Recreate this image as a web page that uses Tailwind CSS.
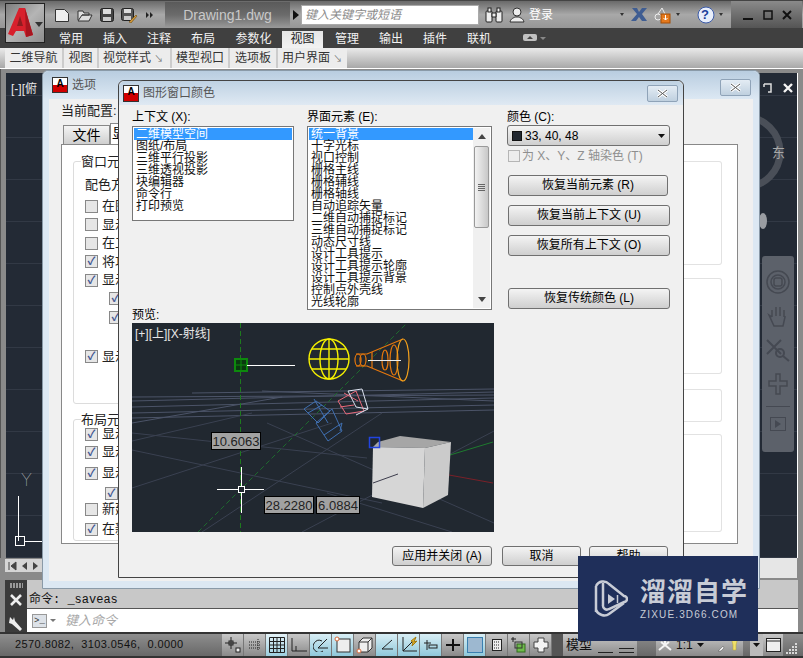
<!DOCTYPE html>
<html lang="zh">
<head>
  <meta charset="UTF-8" />
  <title>AutoCAD - 图形窗口颜色</title>
  <script src="https://cdn.jsdelivr.net/npm/@tailwindcss/browser@4"></script>
</head>
<body class="relative w-[803px] h-[658px] overflow-hidden bg-[#6e6e6e] text-[12px] leading-[14px] font-['Liberation_Sans','Noto_Sans_CJK_SC',sans-serif]">

  <!-- title bar -->
  <header class="h-[28px] flex items-center bg-linear-to-b from-[#6a6a6a] via-[#a8a8a8] to-[#969696] border-t border-[#444]">
    <div class="ml-[5px] mt-[16px] w-[40px] h-[40px] z-10 border border-[#222] bg-linear-to-br from-[#7d7d7d] via-[#b5b5b5] to-[#8e8e8e] flex items-center justify-center relative">
      <svg width="38" height="38" viewBox="0 0 38 38">
        <polygon points="13,4 19,4 27,31 20,33 18,27 10,27 7,32 2,30" fill="#d8202c"/>
        <polygon points="14,12 17,22 11,22" fill="#8e1c20"/>
        <polygon points="19,4 27,31 20,33" fill="#a8151f"/>
        <polygon points="29,18 37,18 33,23" fill="#333"/>
      </svg>
    </div>
    <div class="ml-[8px] flex items-center gap-[5px] w-[112px] h-[20px]">
      <svg width="18" height="16" viewBox="0 0 18 16" fill="#eee" stroke="#333"><path d="M2.5 2.5h9l4 4v8h-13z"/></svg>
      <svg width="18" height="16" viewBox="0 0 18 16" fill="#ddd" stroke="#333"><path d="M2 13V4h5l1 2h5v2H6l-4 6h11l3-6H6"/></svg>
      <svg width="16" height="16" viewBox="0 0 16 16"><rect x="1.5" y="1.5" width="13" height="13" rx="2" fill="#444" stroke="#222"/><rect x="4" y="2" width="8" height="5" fill="#ddd"/><rect x="4" y="10" width="8" height="4" fill="#ccc"/></svg>
      <svg width="18" height="16" viewBox="0 0 18 16"><rect x="1.5" y="1.5" width="12" height="12" rx="2" fill="#555" stroke="#222"/><rect x="4" y="2" width="7" height="4" fill="#ddd"/><rect x="4" y="9" width="7" height="4" fill="#ccc"/><path d="M9 15l7-7 1 1-6 7z" fill="#d59a3a" stroke="#6b4b10" stroke-width=".6"/></svg>
      <svg width="10" height="8" viewBox="0 0 10 8" fill="#222" class="ml-[2px]"><path d="M1 1l3 3-3 3zM5 1l3 3-3 3z"/></svg>
    </div>
    <div class="w-[125px] h-[26px] bg-linear-to-b from-[#5a5a5a] via-[#6b6b6b] to-[#9a9a9a] text-[#c9c9c9] text-[14px] flex items-center justify-center">Drawing1.dwg</div>
    <svg width="12" height="10" viewBox="0 0 12 10" class="mr-[-1px]"><path d="M3 0l6 5-6 5z" fill="#111"/></svg>
    <div class="w-[178px] h-[20px] bg-white border border-[#aaa] text-[#8a8a8a] italic pl-[3px] flex items-center">键入关键字或短语</div>
    <svg width="20" height="16" viewBox="0 0 20 16" class="ml-[5px]" fill="#eee" stroke="#222"><rect x="2" y="4" width="6" height="11" rx="1"/><rect x="12" y="4" width="6" height="11" rx="1"/><rect x="4" y="1" width="3" height="4"/><rect x="13" y="1" width="3" height="4"/><path d="M8 6h4v4H8z"/></svg>
    <svg width="18" height="18" viewBox="0 0 18 18" class="ml-[4px]" fill="#eee" stroke="#333"><circle cx="9" cy="6" r="4"/><path d="M2 16c1-4 4-4 5-5h4c1 1 4 1 5 5z"/></svg>
    <span class="ml-[3px] text-white w-[89px]">登录</span>
    <svg width="8" height="4" viewBox="0 0 8 4" class="mr-[5px]"><path d="M2 0h4L4 3z" fill="#333"/></svg>
    <svg width="17" height="15" viewBox="0 0 17 15" class="mr-[5px]"><path d="M1 1h5l2 4 3-4h5l-5 6 5 7h-5l-3-4-3 4H0l6-7z" fill="#3f5d92"/></svg>
    <svg width="18" height="18" viewBox="0 0 18 18"><circle cx="5" cy="11" r="3" fill="none" stroke="#eee"/><path d="M5 8l4-6 3 6" fill="none" stroke="#eee"/><rect x="8" y="8" width="9" height="9" fill="#e5791c" stroke="#a34f06"/><path d="M12.5 9v5M10.5 12l2 2 2-2" stroke="#fff" fill="none"/></svg>
    <svg width="8" height="4" viewBox="0 0 8 4" class="ml-[3px]"><path d="M2 0h4L4 3z" fill="#333"/></svg>
    <svg width="18" height="18" viewBox="0 0 18 18" class="ml-[15px]"><circle cx="9" cy="9" r="8" fill="#e8eefb" stroke="#3a5aa8"/></svg>
    <span class="ml-[-14px] w-[10px] text-[13px] font-bold text-[#20409a]">?</span>
    <svg width="8" height="4" viewBox="0 0 8 4" class="ml-[6px]"><path d="M2 0h4L4 3z" fill="#333"/></svg>
    <div class="ml-[6px] w-[71px] h-[27px] bg-linear-to-b from-[#8a8a8a] to-[#555] flex items-center justify-center gap-[9px]">
      <svg width="12" height="12" viewBox="0 0 12 12"><path d="M1 10h10" stroke="#111" stroke-width="2"/></svg>
      <svg width="10" height="10" viewBox="0 0 10 10"><rect x="1" y="1" width="8" height="8" fill="none" stroke="#111" stroke-width="1.5"/></svg>
      <svg width="10" height="10" viewBox="0 0 10 10"><path d="M1 1l8 8M9 1l-8 8" stroke="#111" stroke-width="2"/></svg>
    </div>
  </header>

  <!-- ribbon tabs -->
  <nav class="h-[20px] bg-[#404040] pl-[49px] flex text-[#f2f2f2] text-center leading-[23px]">
    <span class="w-[44px]">常用</span>
    <span class="w-[44px]">插入</span>
    <span class="w-[44px]">注释</span>
    <span class="w-[44px]">布局</span>
    <span class="w-[57px]">参数化</span>
    <span class="w-[41px] mt-[3px] leading-[17px] bg-linear-to-b from-[#e6e6e6] to-[#f2f2f2] text-[#222]">视图</span>
    <span class="w-[48px]">管理</span>
    <span class="w-[40px]">输出</span>
    <span class="w-[48px]">插件</span>
    <span class="w-[40px]">联机</span>
    <span class="ml-[24px] flex items-center gap-[3px]">
      <svg width="14" height="8" viewBox="0 0 14 8"><rect width="14" height="7" rx="2" fill="#c0c0c0"/><path d="M4 5l3-3 3 3z" fill="#444"/></svg>
      <svg width="6" height="3" viewBox="0 0 6 3"><path d="M0 0h6L3 3z" fill="#888"/></svg>
    </span>
  </nav>

  <!-- ribbon panel labels -->
  <div class="h-[21px] flex bg-linear-to-b from-[#eaeaea] to-[#a8a8a8] border-b border-white text-[#333] leading-[21px] pl-[5px]">
    <span class="w-[59px] bg-[#ececec] border-r-2 border-[#ccc] text-center">二维导航</span>
    <span class="w-[35px] bg-[#ececec] border-r-2 border-[#ccc] text-center">视图</span>
    <span class="w-[73px] bg-[#ececec] border-r-2 border-[#ccc] pl-[4px]">视觉样式 <span class="text-[9px] text-[#777]">↘</span></span>
    <span class="w-[58px] bg-[#ececec] border-r-2 border-[#ccc] text-center">模型视口</span>
    <span class="w-[48px] bg-[#ececec] border-r-2 border-[#ccc] text-center">选项板</span>
    <span class="w-[69px] bg-[#ececec] pl-[4px]">用户界面 <span class="text-[9px] text-[#777]">↘</span></span>
  </div>

  <!-- drawing area -->
  <main class="relative h-[489px] bg-[#8a8a8a] pt-[4px] pl-[5px] pr-[5px] border-l border-[#555]">
    <div class="relative h-[485px] border-r border-white bg-[#232a35] bg-[repeating-linear-gradient(0deg,#323945_0,#323945_1px,transparent_1px,transparent_42px)] text-[#e8e8e8]">
      <span class="absolute left-[5px] top-[9px] whitespace-nowrap">[-][俯</span>

      <!-- UCS icon -->
      <span class="absolute left-[15px] top-[400px] text-[17px] font-['Inter'] font-thin text-[#d8d8d8]">Y</span>
      <div class="absolute left-[12px] top-[423px] w-px h-[45px] bg-white"></div>
      <div class="absolute left-[9px] top-[463px] w-[10px] h-[10px] border border-white"></div>
      <div class="absolute left-[19px] top-[468px] w-[19px] h-px bg-white"></div>

      <!-- viewcube + nav bar on the right -->
      <svg class="absolute left-[700px] top-[30px]" width="90" height="130" viewBox="0 0 90 130">
        <circle cx="39" cy="49" r="35" fill="none" stroke="#4a4f58" stroke-width="7"/>
        <ellipse cx="57" cy="118" rx="4" ry="8" fill="#9a9da2"/>
      </svg>
      <span class="absolute left-[766px] top-[73px] text-[13px] text-[#a8a8a8]">东</span>
      <svg class="absolute left-[756px] top-[10px]" width="34" height="12" viewBox="0 0 34 12">
        <path d="M2 1h7v8H6M2 1v3" fill="none" stroke="#ddd" stroke-width="1.5"/>
        <path d="M22 1l8 8M30 1l-8 8" stroke="#f4f4f4" stroke-width="2.4"/>
      </svg>
      <div class="absolute left-[756px] top-[183px] w-[32px] h-[196px] rounded-[3px] bg-[#5c616a] flex flex-col items-center pt-[14px] gap-[10px]">
        <svg width="24" height="24" viewBox="0 0 24 24" fill="none" stroke="#454952" stroke-width="1.5"><circle cx="12" cy="12" r="11"/><circle cx="12" cy="12" r="7"/><rect x="8" y="8" width="8" height="8" rx="2"/></svg>
        <svg width="24" height="24" viewBox="0 0 24 24" fill="none" stroke="#454952" stroke-width="1.5"><path d="M6 13V6M10 12V3M14 12V3M18 13V6M6 13l-3-2 5 11h9l2-9v-1"/></svg>
        <svg width="26" height="24" viewBox="0 0 26 24" fill="none" stroke="#454952" stroke-width="2"><path d="M2 2l14 14M16 2L2 16"/><circle cx="15" cy="15" r="4"/><path d="M18 18l6 5"/></svg>
        <svg width="22" height="24" viewBox="0 0 22 24" fill="none" stroke="#454952" stroke-width="1.5"><path d="M9 2h4v7h7v5h-7v8H9v-8H2V9h7z"/></svg>
        <div class="w-[24px] h-px bg-[#454952]"></div>
        <svg width="16" height="14" viewBox="0 0 16 14"><rect x=".5" y=".5" width="15" height="13" fill="none" stroke="#454952"/><path d="M5 3l6 4-6 4z" fill="#454952"/></svg>
      </div>
    </div>
  </main>

  <!-- command window -->
  <section class="absolute left-0 top-[558px] w-[803px] h-[76px] flex bg-[#8a8a8a] pl-[5px] pr-[5px]">
    <div class="flex-1 relative">
      <div class="h-[14px] bg-[#d5d5d5] w-[37px] flex items-center gap-[4px] pl-[3px] border-t border-[#888]">
        <svg width="9" height="10" viewBox="0 0 9 10"><path d="M1 1v8M8 1L3 5l5 4z" fill="#444" stroke="#444"/></svg>
        <svg width="7" height="10" viewBox="0 0 7 10"><path d="M6 1L1 5l5 4z" fill="#444"/></svg>
        <svg width="7" height="10" viewBox="0 0 7 10"><path d="M1 1l5 4-5 4z" fill="#444"/></svg>
      </div>
      <div class="absolute left-[755px] top-0 w-[37px] h-[20px] bg-[#e6e6e6]"></div>
      <div class="absolute left-0 top-[22px] w-[793px] h-[52px] flex">
        <div class="w-[22px] bg-[#3b3b3b] flex flex-col items-center">
          <div class="mt-[3px] w-[13px] h-[5px] bg-[repeating-linear-gradient(90deg,#999_0,#999_2px,transparent_2px,transparent_3px)]"></div>
          <svg class="mt-[6px]" width="12" height="12" viewBox="0 0 12 12"><path d="M1 1l10 10M11 1L1 11" stroke="#eee" stroke-width="2.6"/></svg>
          <svg class="mt-[9px]" width="16" height="16" viewBox="0 0 16 16"><path d="M2 2l3 3 1-3 1 4 7 8-2 2-8-7-3-1z" fill="#eee"/></svg>
        </div>
        <div class="flex-1 flex flex-col">
          <div class="h-[29px] bg-[#c8c8c8] border-b border-[#555] pt-[13px] pl-[2px] text-[#111] font-['Liberation_Mono','Noto_Sans_CJK_SC',monospace] whitespace-pre">命令: _saveas</div>
          <div class="h-[23px] bg-white flex items-center pl-[5px]">
            <div class="w-[15px] h-[14px] bg-[#dde2e8] border border-[#999] text-[9px] leading-[12px] text-[#333] text-center font-['Liberation_Mono',monospace]">&gt;_</div>
            <svg class="ml-[3px]" width="6" height="3" viewBox="0 0 6 3"><path d="M0 0h6L3 3z" fill="#777"/></svg>
            <span class="ml-[9px] text-[#a8a8a8] italic text-[13px]">键入命令</span>
          </div>
        </div>
      </div>
    </div>
  </section>

  <!-- status bar -->
  <footer class="absolute left-0 bottom-0 w-[803px] h-[26px] flex items-stretch pl-[4px] border-t-2 border-b-2 border-[#333] bg-linear-to-b from-[#8e8e8e] to-[#686868]">
    <div class="w-[218px] pl-[11px] pb-[2px] flex items-center text-[11px] text-[#111] whitespace-pre tracking-[0.42px]">2570.8082,  3103.0546,  0.0000</div>
    <div class="flex text-[#111]">
      <span class="w-[22px] border-r border-[#777] bg-linear-to-b from-[#c8c8c8] to-[#8a8a8a] flex items-center justify-center"><svg width="16" height="16" viewBox="0 0 16 16" fill="none" stroke="#222"><path d="M0 6h12M6 0v12"/><rect x="4" y="4" width="4" height="4"/><rect x="11" y="11" width="4" height="4" fill="#eee"/></svg></span>
      <span class="w-[22px] border-r border-[#777] bg-linear-to-b from-[#c8c8c8] to-[#8a8a8a] flex items-center justify-center"><svg width="14" height="12" viewBox="0 0 14 12" fill="none" stroke="#222" stroke-dasharray="1 1"><path d="M1 3h12M1 6h12M1 9h12M10 0v11"/></svg></span>
      <span class="w-[22px] border-r border-[#777] bg-linear-to-b from-[#e4f2f7] to-[#9ccfdf] flex items-center justify-center"><svg width="16" height="16" viewBox="0 0 16 16" fill="none" stroke="#222"><path d="M.5.5h15v15H.5zM4.5 1v14M8 1v14M11.5 1v14M1 4.5h14M1 8h14M1 11.5h14"/></svg></span>
      <span class="w-[22px] border-r border-[#777] bg-linear-to-b from-[#c8c8c8] to-[#8a8a8a] flex items-center justify-center"><svg width="16" height="14" viewBox="0 0 16 14" fill="none" stroke="#222"><path d="M1 0v13h15M5 13V8"/></svg></span>
      <span class="w-[22px] border-r border-[#777] bg-linear-to-b from-[#d8eef5] to-[#8fc8da] flex items-center justify-center"><svg width="16" height="14" viewBox="0 0 16 14" fill="none" stroke="#222"><path d="M14 1L5 10h10"/><path d="M9 3a6 6 0 1 0 1 10"/></svg></span>
      <span class="w-[22px] border-r border-[#777] bg-linear-to-b from-[#d8eef5] to-[#8fc8da] flex items-center justify-center relative"><svg width="18" height="18" viewBox="0 0 18 18"><rect x="3" y="3" width="13" height="13" fill="#eee" stroke="#333"/><circle cx="3" cy="3" r="2" fill="#fff" stroke="#d96a3a"/></svg></span>
      <span class="w-[22px] border-r border-[#777] bg-linear-to-b from-[#c8c8c8] to-[#8a8a8a] flex items-center justify-center"><svg width="18" height="18" viewBox="0 0 18 18"><path d="M3 6l4-4h9v10l-4 4H3z" fill="#eee" stroke="#333"/><path d="M3 6h9v10M12 6l4-4" fill="none" stroke="#333"/><circle cx="3" cy="15" r="2" fill="#fff" stroke="#d96a3a"/></svg></span>
      <span class="w-[22px] border-r border-[#777] bg-linear-to-b from-[#d8eef5] to-[#8fc8da] flex items-center justify-center"><svg width="14" height="12" viewBox="0 0 14 12" fill="none" stroke="#222"><path d="M12 1L2 10h11"/></svg></span>
      <span class="w-[22px] border-r border-[#777] bg-linear-to-b from-[#d8eef5] to-[#8fc8da] flex items-center justify-center"><svg width="18" height="18" viewBox="0 0 18 18" fill="none" stroke="#222"><path d="M3 1v14h14M3 15l9-9"/><path d="M11 5l5-4-2 5 3-1-5 5 1-4z" fill="#e0b22c" stroke="#a37a10"/></svg></span>
      <span class="w-[22px] border-r border-[#777] bg-linear-to-b from-[#d8eef5] to-[#8fc8da] flex items-center justify-center"><svg width="14" height="12" viewBox="0 0 14 12" fill="none" stroke="#222"><path d="M3 1v10M0 4h7"/><rect x="5" y="6" width="8" height="3"/></svg></span>
      <span class="w-[22px] border-r border-[#777] bg-linear-to-b from-[#c8c8c8] to-[#8a8a8a] flex items-center justify-center"><svg width="14" height="14" viewBox="0 0 14 14"><path d="M0 7h14M7 1v12" stroke="#111" stroke-width="2"/></svg></span>
      <span class="w-[22px] border-r border-[#777] bg-linear-to-b from-[#d8eef5] to-[#8fc8da] flex items-center justify-center"><div class="w-[16px] h-[16px] border border-[#3a7fb0] bg-[#9db8d0]"></div></span>
      <span class="w-[22px] border-r border-[#777] bg-linear-to-b from-[#c8c8c8] to-[#8a8a8a] flex items-center justify-center"><svg width="10" height="12" viewBox="0 0 10 12"><rect x=".5" y=".5" width="9" height="11" fill="#eee" stroke="#222"/><path d="M2 3h6M2 6h6M2 9h6" stroke="#222" stroke-dasharray="1 1"/></svg></span>
      <span class="w-[22px] border-r border-[#777] bg-linear-to-b from-[#c8c8c8] to-[#8a8a8a] flex items-center justify-center"><svg width="18" height="18" viewBox="0 0 18 18"><path d="M1 3h5M3 1v5" stroke="#222"/><rect x="7" y="8" width="8" height="8" fill="#6fbb4b" stroke="#336a1f"/><rect x="5" y="6" width="7" height="6" fill="none" stroke="#333"/></svg></span>
      <span class="w-[22px] border-r border-[#777] bg-linear-to-b from-[#c8c8c8] to-[#8a8a8a] flex items-center justify-center"><svg width="16" height="16" viewBox="0 0 16 16"><path d="M5 1h6v4h4v6h-4v4H5v-4H1V5h4z" fill="#f4f4f4" stroke="#444"/></svg></span>
      <span class="w-[11px] bg-[#555]"></span>
      <span class="w-[32px] bg-linear-to-b from-[#c8c8c8] to-[#8a8a8a] text-center leading-[22px] text-[13px]">模型</span>
      <span class="w-[21px] bg-linear-to-b from-[#c8c8c8] to-[#8a8a8a] flex items-end justify-center pb-[3px]"><i class="w-[15px] h-[3px] border-b border-[#222]"></i></span>
      <span class="w-[21px] bg-linear-to-b from-[#c8c8c8] to-[#8a8a8a] flex items-end justify-center pb-[3px]"><i class="w-[15px] h-[5px] border-y border-[#222]"></i></span>
      <span class="w-[19px]"></span>
      <span class="w-[58px] bg-linear-to-b from-[#c8c8c8] to-[#8a8a8a] flex items-center gap-[4px] pl-[2px]">
        <svg width="14" height="12" viewBox="0 0 14 12"><path d="M7 1v6M7 6L1 11M7 6l6 5M3 3l4 3 4-3" stroke="#f4f4f4" stroke-width="2" fill="none"/></svg>
        <span>1:1</span>
        <svg width="7" height="4" viewBox="0 0 7 4"><path d="M0 0h7L3.500 4z" fill="#111"/></svg>
      </span>
      <span class="w-[29px] bg-linear-to-b from-[#c8c8c8] to-[#8a8a8a] flex items-center justify-center">
        <svg width="22" height="16" viewBox="0 0 22 16"><path d="M0 14l5-5 1 2-3 3z" fill="#eee" stroke="#555" stroke-width=".5"/><path d="M13 0h7l-2 8v5h-3V8z" fill="#efe06a" stroke="#b5a42a" stroke-width=".5"/></svg>
      </span>
      <span class="w-[7px]"></span>
      <span class="w-[13px] flex items-center justify-center bg-[#bbb]"><svg width="7" height="4" viewBox="0 0 7 4"><path d="M0 0h7L3.500 4z" fill="#111"/></svg></span>
      <span class="w-[20px] flex items-center justify-center bg-linear-to-b from-[#c8c8c8] to-[#8a8a8a]"><svg width="15" height="14" viewBox="0 0 15 14"><rect x=".5" y=".5" width="14" height="13" fill="#eee" stroke="#222"/><path d="M1 3h13" stroke="#222"/></svg></span>
      <span class="w-[15px] flex items-end justify-end pb-[1px]"><svg width="13" height="13" viewBox="0 0 13 13" fill="#d8d8d8"><rect x="10" y="1" width="2" height="2"/><rect x="7" y="4" width="2" height="2"/><rect x="10" y="4" width="2" height="2"/><rect x="4" y="7" width="2" height="2"/><rect x="7" y="7" width="2" height="2"/><rect x="10" y="7" width="2" height="2"/><rect x="1" y="10" width="2" height="2"/><rect x="4" y="10" width="2" height="2"/><rect x="7" y="10" width="2" height="2"/><rect x="10" y="10" width="2" height="2"/></svg></span>
    </div>
  </footer>

  <!-- options dialog (behind) -->
  <section class="absolute left-[42px] top-[70px] w-[718px] h-[519px] rounded-t-[6px] border border-[#8a9aa8] bg-[#dce8f3] flex flex-col px-[6px] pb-[7px]">
    <div class="h-[28px] -mx-[6px] pl-[9px] rounded-t-[6px] bg-linear-to-b from-[#b9cde0] to-[#dce8f3] flex items-center gap-[3px] text-[#555]">
      <span class="w-[16px] h-[16px] border border-[#333] bg-linear-to-b from-white from-50% to-[#d00000] to-50% text-[10px] leading-[12px] text-center font-bold text-black">A</span>
      <span class="ml-px">选项</span>
    </div>
    <div class="flex-1 bg-[#f0f0f0] pl-[12px] pr-[15px] pb-[37px] flex flex-col">
      <div class="h-[26px] pt-[5px] text-[13px] text-[#222]">当前配置:</div>
      <div class="h-[19px] flex ml-[2px]">
        <span class="w-[47px] bg-linear-to-b from-[#f4f4f4] to-[#cfcfcf] border border-b-0 border-[#888] text-center text-[14px] leading-[18px]">文件</span>
        <span class="w-[16px] h-[21px] -mt-[2px] bg-white border border-b-0 border-[#888] text-[14px] leading-[19px] pl-[1px] overflow-hidden">显示</span>
      </div>
      <div class="flex-1 bg-white border border-[#888] pl-[11px] pt-[16px] flex flex-col">
        <div class="relative w-[300px] h-[243px] border border-[#dcdcdc] rounded-[3px] pl-[11px] pt-[16px] text-[13px] text-[#222]">
          <span class="absolute left-[7px] -top-[8px] bg-white pr-[2px] leading-[16px]">窗口元素</span>
          <p class="h-[21px]">配色方案</p>
          <div class="flex flex-col gap-[4.5px]">
            <label class="flex items-center gap-[4px] h-[14px]"><span class="w-[13px] h-[13px] border border-[#888] bg-[#e6e6e6]"></span>在图形窗口中显示</label>
            <label class="flex items-center gap-[4px] h-[14px]"><span class="w-[13px] h-[13px] border border-[#888] bg-[#e6e6e6]"></span>显示图形状态栏</label>
            <label class="flex items-center gap-[4px] h-[14px]"><span class="w-[13px] h-[13px] border border-[#888] bg-[#e6e6e6]"></span>在工具栏中使用</label>
            <label class="flex items-center gap-[4px] h-[14px]"><span class="w-[13px] h-[13px] border border-[#888] bg-[#e6e6e6] text-[#3f5590] text-[11px] leading-[11px] text-center font-bold">✓</span>将功能区图标</label>
            <label class="flex items-center gap-[4px] h-[14px]"><span class="w-[13px] h-[13px] border border-[#888] bg-[#e6e6e6] text-[#3f5590] text-[11px] leading-[11px] text-center font-bold">✓</span>显示工具提示</label>
            <label class="flex items-center gap-[4px] h-[14px] ml-[24px]"><span class="w-[13px] h-[13px] border border-[#888] bg-[#e6e6e6] text-[#3f5590] text-[11px] leading-[11px] text-center font-bold">✓</span>显示</label>
            <label class="flex items-center gap-[4px] h-[14px] ml-[24px]"><span class="w-[13px] h-[13px] border border-[#888] bg-[#e6e6e6] text-[#3f5590] text-[11px] leading-[11px] text-center font-bold">✓</span>显示</label>
            <label class="flex items-center gap-[4px] h-[14px] mt-[21px]"><span class="w-[13px] h-[13px] border border-[#888] bg-[#e6e6e6] text-[#3f5590] text-[11px] leading-[11px] text-center font-bold">✓</span>显示文件选项卡</label>
          </div>
        </div>
        <div class="relative w-[300px] mt-[15px] h-[122px] border border-[#dcdcdc] rounded-[3px] pl-[11px] pt-[7px] text-[13px] text-[#222]">
          <span class="absolute left-[7px] -top-[8px] bg-white pr-[2px] leading-[16px]">布局元素</span>
          <div class="flex flex-col gap-[4px]">
            <label class="flex items-center gap-[4px] h-[14px]"><span class="w-[13px] h-[13px] border border-[#888] bg-[#e6e6e6] text-[#3f5590] text-[11px] leading-[11px] text-center font-bold">✓</span>显示布局</label>
            <label class="flex items-center gap-[4px] h-[14px]"><span class="w-[13px] h-[13px] border border-[#888] bg-[#e6e6e6] text-[#3f5590] text-[11px] leading-[11px] text-center font-bold">✓</span>显示可打印</label>
            <label class="flex items-center gap-[4px] h-[14px] mt-[3px]"><span class="w-[13px] h-[13px] border border-[#888] bg-[#e6e6e6] text-[#3f5590] text-[11px] leading-[11px] text-center font-bold">✓</span>显示图纸</label>
            <label class="flex items-center gap-[4px] h-[14px] ml-[20px] mt-[2px]"><span class="w-[13px] h-[13px] border border-[#888] bg-[#e6e6e6] text-[#3f5590] text-[11px] leading-[11px] text-center font-bold">✓</span></label>
            <label class="flex items-center gap-[4px] h-[14px] -mt-[2px]"><span class="w-[13px] h-[13px] border border-[#888] bg-[#e6e6e6]"></span>新建布局</label>
            <label class="flex items-center gap-[4px] h-[14px] mt-[2px]"><span class="w-[13px] h-[13px] border border-[#888] bg-[#e6e6e6] text-[#3f5590] text-[11px] leading-[11px] text-center font-bold">✓</span>在新布局</label>
          </div>
        </div>
      </div>
    </div>
    <!-- white group panels visible right of the colour dialog -->
    <div class="absolute left-[641px] top-[90px] w-[38px] h-[104px] border border-l-0 border-[#e2e2e2] rounded-r-[3px]"></div>
    <div class="absolute left-[641px] top-[207px] w-[38px] h-[96px] border border-l-0 border-[#e2e2e2] rounded-r-[3px]"></div>
    <div class="absolute left-[641px] top-[318px] w-[38px] h-[33px] border border-l-0 border-[#e2e2e2] rounded-r-[3px]"></div>
    <div class="absolute left-[641px] top-[363px] w-[38px] h-[98px] border border-l-0 border-[#e2e2e2] rounded-r-[3px]"></div>
    <button class="absolute left-[677px] top-[8px] w-[31px] h-[17px] rounded-[2px] border border-[#8fa3b8] bg-linear-to-b from-[#e4ecf4] to-[#bfd0df] flex items-center justify-center">
      <svg width="11" height="9" viewBox="0 0 11 9"><path d="M1 1l9 7M10 1L1 8" stroke="#fff" stroke-width="3"/><path d="M1 1l9 7M10 1L1 8" stroke="#555" stroke-width="1"/></svg>
    </button>
  </section>

  <!-- graphics window colour dialog -->
  <section class="absolute left-[118px] top-[80px] w-[566px] h-[498px] rounded-t-[6px] border border-[#444] bg-[#f0f0f0] flex flex-col">
    <div class="h-[24px] rounded-t-[6px] bg-linear-to-b from-[#bfd2e3] to-[#dfe9f3] flex items-center pl-[4px] text-[#555]">
      <span class="w-[16px] h-[17px] border border-[#333] bg-linear-to-b from-white from-50% to-[#d00000] to-50% text-[10px] leading-[12px] text-center font-bold text-black">A</span>
      <span class="ml-[4px]">图形窗口颜色</span>
      <button class="ml-auto mr-[5px] w-[31px] h-[17px] rounded-[2px] border border-[#8fa3b8] bg-linear-to-b from-[#e4ecf4] to-[#bfd0df] flex items-center justify-center">
        <svg width="11" height="9" viewBox="0 0 11 9"><path d="M1 1l9 7M10 1L1 8" stroke="#fff" stroke-width="3"/><path d="M1 1l9 7M10 1L1 8" stroke="#555" stroke-width="1"/></svg>
      </button>
    </div>

    <div class="flex pl-[13px]">
      <div class="w-[362px]">
        <div class="flex gap-[13px] pt-[5px]">
          <div class="w-[162px]">
            <div class="h-[16px]">上下文 (X):</div>
            <ul class="h-[95px] bg-white border border-[#777] p-px leading-[12px] text-[#111]">
              <li class="bg-[#3399ff] text-white pl-[2px]">二维模型空间</li>
              <li class="pl-[2px]">图纸/布局</li>
              <li class="pl-[2px]">三维平行投影</li>
              <li class="pl-[2px]">三维透视投影</li>
              <li class="pl-[2px]">块编辑器</li>
              <li class="pl-[2px]">命令行</li>
              <li class="pl-[2px]">打印预览</li>
            </ul>
          </div>
          <div class="w-[185px]">
            <div class="h-[16px]">界面元素 (E):</div>
            <div class="h-[184px] bg-white border border-[#777] p-px flex">
              <ul class="flex-1 leading-[12px] text-[#111] overflow-hidden">
                <li class="bg-[#3399ff] text-white pl-[2px]">统一背景</li>
                <li class="pl-[2px]">十字光标</li>
                <li class="pl-[2px]">视口控制</li>
                <li class="pl-[2px]">栅格主线</li>
                <li class="pl-[2px]">栅格辅线</li>
                <li class="pl-[2px]">栅格轴线</li>
                <li class="pl-[2px]">自动追踪矢量</li>
                <li class="pl-[2px]">二维自动捕捉标记</li>
                <li class="pl-[2px]">三维自动捕捉标记</li>
                <li class="pl-[2px]">动态尺寸线</li>
                <li class="pl-[2px]">设计工具提示</li>
                <li class="pl-[2px]">设计工具提示轮廓</li>
                <li class="pl-[2px]">设计工具提示背景</li>
                <li class="pl-[2px]">控制点外壳线</li>
                <li class="pl-[2px]">光线轮廓</li>
              </ul>
              <div class="w-[17px] bg-[#f0f0f0] flex flex-col items-center">
                <svg class="mt-[6px]" width="8" height="5" viewBox="0 0 8 5"><path d="M0 5l4-5 4 5z" fill="#444"/></svg>
                <div class="mt-[7px] w-[15px] h-[82px] rounded-[2px] border border-[#999] bg-linear-to-r from-[#f2f2f2] to-[#c8c8c8] flex flex-col items-center justify-center gap-[1px]">
                  <i class="w-[7px] h-px bg-[#666]"></i><i class="w-[7px] h-px bg-[#666]"></i><i class="w-[7px] h-px bg-[#666]"></i><i class="w-[7px] h-px bg-[#666]"></i>
                </div>
                <svg class="mt-auto mb-[6px]" width="8" height="5" viewBox="0 0 8 5"><path d="M0 0l4 5 4-5z" fill="#444"/></svg>
              </div>
            </div>
          </div>
        </div>
        <div class="h-[13px] leading-[10px]">预览:</div>
        <!-- preview canvas -->
        <div class="relative w-[362px] h-[209px] bg-[#212830] overflow-hidden">
          <svg class="absolute inset-0" width="362" height="209" viewBox="0 0 362 209" fill="none">
            <g stroke="#4c5468">
              <path d="M0 74L362 72M0 78L362 69M0 84L362 75M0 90L362 82M0 95L362 87M60 70L362 66M130 68L362 78M0 100L150 74"/>
            </g>
            <g stroke="#3a4151">
              <path d="M0 110L235 135M0 127L250 180M0 165L200 100M70 209L250 90M170 209L362 108M135 100L362 200M0 118L120 90M195 170L320 209"/>
            </g>
            <path d="M108.500 0V209" stroke="#1e7a1e" stroke-dasharray="5 3"/>
            <path d="M66 209L275 0" stroke="#1e6a2e" stroke-dasharray="5 3"/>
            <path d="M318 132L361 119" stroke="#1e7a2e"/>
            <path d="M306 150L361 160" stroke="#7a2028"/>
            <rect x="103" y="36" width="12" height="12" stroke="#0d8a0d" stroke-width="2" fill="#0a3a10"/>
            <path d="M103 42h12M109 36v12" stroke="#0d8a0d"/>
            <path d="M115 42.500H163" stroke="#fff"/>
            <!-- light glyphs -->
            <g stroke="#f5f000" stroke-width="1.400">
              <circle cx="197" cy="36" r="20"/>
              <ellipse cx="197" cy="36" rx="9" ry="20"/>
              <path d="M197 16V56M177 36H217M180 26H214M180 46H214"/>
            </g>
            <g stroke="#e8780c" stroke-width="1.200">
              <ellipse cx="226" cy="37" rx="3" ry="6"/>
              <ellipse cx="231" cy="37" rx="3" ry="6"/>
              <path d="M224 31H235L271 16M224 43H235L271 58"/>
              <ellipse cx="253" cy="37" rx="3" ry="10"/>
              <ellipse cx="262" cy="37" rx="4" ry="15"/>
              <path d="M240 29V45"/>
            </g>
            <ellipse cx="271" cy="37" rx="6" ry="21" stroke="#f4a11c" stroke-width="1.200"/>
            <path d="M236 37.500H269" stroke="#eee"/>
            <!-- camera glyphs -->
            <g stroke="#e8697a"><path d="M206 78L224 68L232 88L214 91Z M212 70L226 78M208 84L222 82"/></g>
            <g stroke="#dde3f0"><path d="M216 68L230 66L236 86L224 92M216 68L224 84L236 86"/></g>
            <g stroke="#3f6fb0">
              <path d="M172 86L184 78L198 88L186 100Z M176 90L190 82M182 76L196 100"/>
              <path d="M184 100L200 86L210 108L196 118Z M192 112L210 100L208 108"/>
            </g>
            <!-- cube -->
            <polygon points="241,124 246,119 268,113 319,119 293,125" fill="#a6a6a6"/>
            <polygon points="241,124 293,125 291,185 240,174" fill="#d6d6d6"/>
            <polygon points="293,125 319,119 316,172 291,185" fill="#cbcbcb"/>
            <path d="M241 160L266 151" stroke="#3c3c4c"/>
            <rect x="237.500" y="114.500" width="10" height="10" stroke="#2244e0" stroke-width="1.500"/>
            <!-- crosshair -->
            <path d="M85 166.500H132M109.500 144V190" stroke="#fff"/>
            <rect x="106.500" y="163.500" width="6" height="6" stroke="#fff" fill="#212830"/>
          </svg>
          <span class="absolute left-[3px] top-[4px] text-[#e6e6e6] whitespace-nowrap">[+][上][X-射线]</span>
          <span class="absolute left-[79px] top-[109px] w-[50px] h-[18px] bg-[#a2a2a2] border border-black text-center text-[13px] leading-[17px] text-[#222]">10.6063</span>
          <span class="absolute left-[132px] top-[173px] w-[50px] h-[18px] bg-[#a2a2a2] border border-black text-center text-[13px] leading-[17px] text-[#222]">28.2280</span>
          <span class="absolute left-[184px] top-[173px] w-[44px] h-[18px] bg-[#a2a2a2] border border-black text-center text-[13px] leading-[17px] text-[#222]">6.0884</span>
        </div>
      </div>

      <!-- right column -->
      <div class="ml-[13px] w-[163px] pt-[5px]">
        <div class="h-[15px]">颜色 (C):</div>
        <div class="h-[21px] rounded-[3px] border border-[#707070] bg-linear-to-b from-[#f4f4f4] to-[#cfcfcf] flex items-center px-[4px] gap-[3px]">
          <span class="w-[10px] h-[10px] bg-[#212830] border border-[#111]"></span>
          <span class="flex-1">33, 40, 48</span>
          <svg width="7" height="4" viewBox="0 0 7 4"><path d="M0 0h7L3.500 4z" fill="#111"/></svg>
        </div>
        <div class="mt-[3px] h-[14px] flex items-center gap-[2px] ml-px text-[#8f8f8f] whitespace-nowrap">
          <span class="w-[12px] h-[12px] border border-[#b5b5b5] bg-[#ededed]"></span>
          <span>为 X、Y、Z 轴染色 (T)</span>
        </div>
        <button class="mt-[12px] ml-px block w-[160px] h-[21px] rounded-[3px] border border-[#707070] bg-linear-to-b from-[#f4f4f4] to-[#cfcfcf] text-center leading-[19px]">恢复当前元素 (R)</button>
        <button class="mt-[9px] ml-px block w-[162px] h-[21px] rounded-[3px] border border-[#707070] bg-linear-to-b from-[#f4f4f4] to-[#cfcfcf] text-center leading-[19px]">恢复当前上下文 (U)</button>
        <button class="mt-[9px] ml-px block w-[162px] h-[21px] rounded-[3px] border border-[#707070] bg-linear-to-b from-[#f4f4f4] to-[#cfcfcf] text-center leading-[19px]">恢复所有上下文 (O)</button>
        <button class="mt-[32px] ml-px block w-[162px] h-[21px] rounded-[3px] border border-[#707070] bg-linear-to-b from-[#f4f4f4] to-[#cfcfcf] text-center leading-[19px]">恢复传统颜色 (L)</button>
      </div>
    </div>

    <div class="mt-[14px] flex justify-end pr-[15px]">
      <button class="w-[100px] h-[20px] rounded-[3px] border border-[#707070] bg-linear-to-b from-[#f4f4f4] to-[#cfcfcf] leading-[18px]">应用并关闭 (A)</button>
      <button class="ml-[10px] w-[79px] h-[20px] rounded-[3px] border border-[#707070] bg-linear-to-b from-[#f4f4f4] to-[#cfcfcf] leading-[18px]">取消</button>
      <button class="ml-[8px] w-[79px] h-[20px] rounded-[3px] border border-[#707070] bg-linear-to-b from-[#f4f4f4] to-[#cfcfcf] leading-[18px]">帮助</button>
    </div>
  </section>

  <!-- watermark -->
  <div class="absolute left-[578px] top-[556px] w-[180px] h-[85px] bg-[#1f2f5a] flex items-center pl-[15px] text-[#c8ccd6]">
    <svg width="35" height="38" viewBox="0 0 35 38" fill="none" stroke="#c8ccd6" stroke-width="2.500">
      <path d="M3 6v26M10 3v22a4 4 0 0 0 6 4L31 22a3 3 0 0 0 0-6L16 4a8 8 0 0 0-13 2"/>
      <path d="M3 30c2 5 9 7 13 4L31 23"/>
      <path d="M15 14l7 5-7 5z" fill="#c8ccd6" stroke="none"/>
      <path d="M24.500 15v8" stroke-width="1.500"/>
    </svg>
    <div class="ml-[12px] flex flex-col">
      <span class="text-[26px] leading-[30px] font-bold tracking-[1px] whitespace-nowrap">溜溜自学</span>
      <span class="mt-[2px] text-[10px] leading-[12px] tracking-[1.150px] whitespace-nowrap">ZIXUE.3D66.COM</span>
    </div>
  </div>
</body>
</html>
